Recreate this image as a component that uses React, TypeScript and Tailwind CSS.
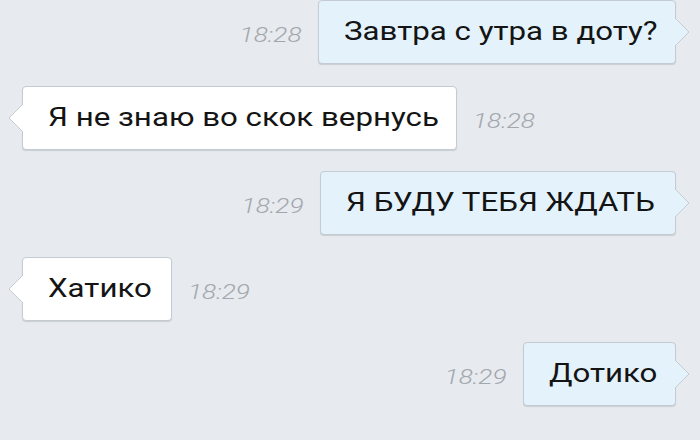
import React from 'react';

type Msg = { text: string; time: string; out: boolean; width: number };

// widths taken off the screenshot (the capture is stretched horizontally)
const messages: Msg[] = [
  { text: 'Завтра с утра в доту?', time: '18:28', out: true, width: 358 },
  { text: 'Я не знаю во скок вернусь', time: '18:28', out: false, width: 435 },
  { text: 'Я БУДУ ТЕБЯ ЖДАТЬ', time: '18:29', out: true, width: 356 },
  { text: 'Хатико', time: '18:29', out: false, width: 150 },
  { text: 'Дотико', time: '18:29', out: true, width: 153 },
];

function Tail({ out }: { out: boolean }) {
  return (
    <svg
      width="18"
      height="30"
      viewBox="0 0 18 30"
      className={`absolute top-1/2 -translate-y-1/2 ${out ? '-right-[16px]' : '-left-[16px] -scale-x-100'}`}
    >
      <path d="M0 1 L2 1 L16 15 L2 29 L0 29 Z" fill={out ? '#e4f2fb' : '#ffffff'} />
      <path d="M2 1 L16 15 L2 29" fill="none" stroke="#c3cbd3" strokeWidth="1" />
    </svg>
  );
}

function Bubble({ msg }: { msg: Msg }) {
  return (
    <div
      style={{ width: msg.width }}
      className={`relative shrink-0 h-16 flex items-center pl-[25px] rounded-[4px] border border-[#c3cbd3] shadow-[0_1px_1px_rgba(0,0,0,0.12)] ${
        msg.out ? 'bg-[#e4f2fb]' : 'bg-white'
      }`}
    >
      <span className="inline-block whitespace-nowrap origin-left scale-x-[1.25] text-[25px] text-[#141414]">
        {msg.text}
      </span>
      <Tail out={msg.out} />
    </div>
  );
}

function Time({ value, out }: { value: string; out: boolean }) {
  return (
    <span
      className={`inline-block pt-2 scale-x-[1.25] text-[21px] italic font-light text-[#a2a7ad] ${
        out ? 'origin-right' : 'origin-left'
      }`}
    >
      {value}
    </span>
  );
}

export default function App() {
  return (
    <div
      className="w-[700px] h-[440px] overflow-hidden bg-[#e7eaee] flex flex-col gap-[21.5px] pl-[22px] pr-[24px]"
      style={{ fontFamily: 'Roboto, "Noto Sans", sans-serif' }}
    >
      {messages.map((m, i) => (
        <div key={i} className={`flex items-center gap-4 ${m.out ? 'justify-end' : 'justify-start'}`}>
          {m.out ? (
            <>
              <Time value={m.time} out />
              <Bubble msg={m} />
            </>
          ) : (
            <>
              <Bubble msg={m} />
              <Time value={m.time} out={false} />
            </>
          )}
        </div>
      ))}
    </div>
  );
}
